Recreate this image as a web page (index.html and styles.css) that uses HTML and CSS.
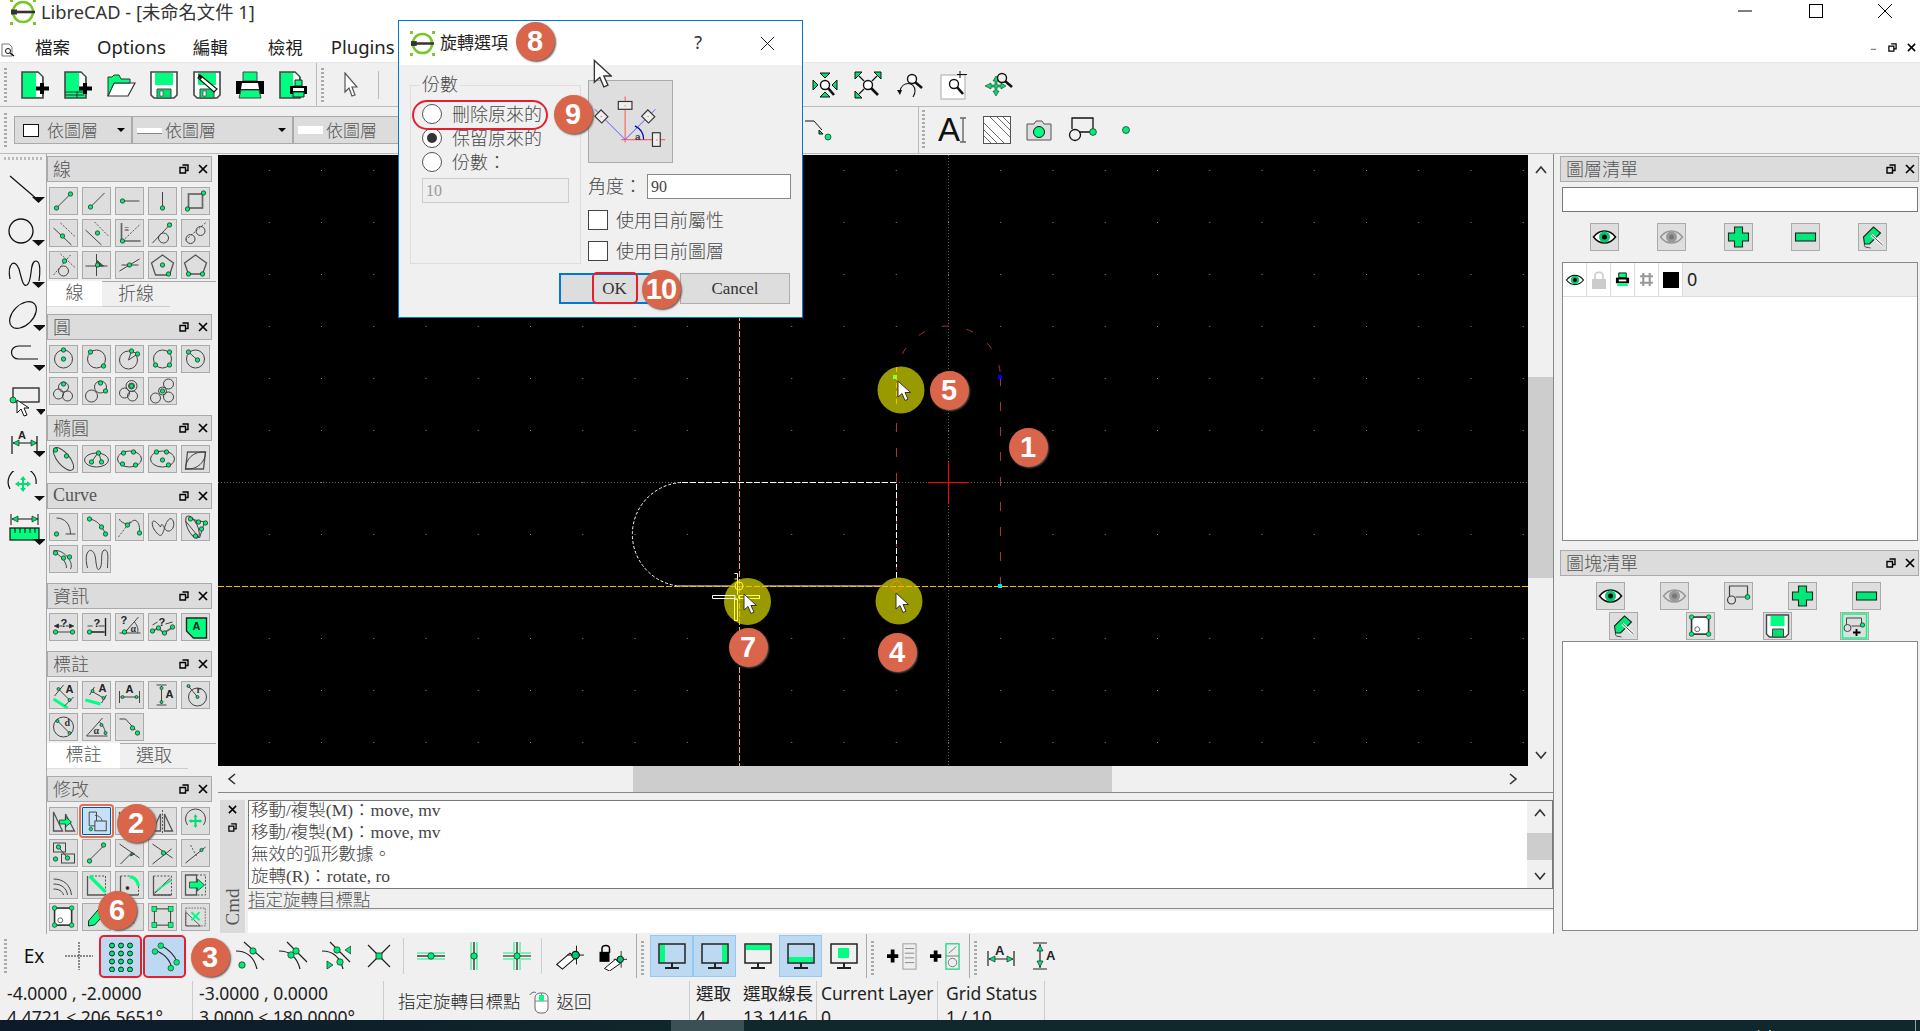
FILE: index.html
```html
<!DOCTYPE html>
<html lang="zh-Hant">
<head>
<meta charset="utf-8">
<title>LibreCAD</title>
<link rel="stylesheet" href="styles.css">
</head>
<body>
<svg class="defs" aria-hidden="true">
<symbol id="logo" viewBox="0 0 26 26"><circle cx="13" cy="13" r="10" fill="none" stroke="#7ac52a" stroke-width="2.6"/><path d="M1 13H25" stroke="#333" stroke-width="2.6"/><rect x="1" y="10.5" width="6" height="5" fill="#333"/><path d="M0 0h3v3H0zM23 0h3v3h-3zM0 23h3v3H0zM23 23h3v3h-3z" fill="#7ac52a"/></symbol>
<symbol id="dockf" viewBox="0 0 10 10"><path d="M3.5 1h5.5v5.5h-2.500M1 3.500h5.500V9H1z" fill="none" stroke="#000" stroke-width="1.400"/></symbol>
<symbol id="dockx" viewBox="0 0 10 10"><path d="M1 1L9 9M9 1L1 9" stroke="#000" stroke-width="1.700"/></symbol>
<symbol id="cursor" viewBox="0 0 14 22"><path d="M1 1V17L5 13.500 8 20.500 11 19.200 8 12.500H13.500z" fill="#fff" stroke="#333" stroke-width="1"/></symbol>

<symbol id="tnew" viewBox="0 0 30 30"><path d="M2 2H18L23 7V28H2z" fill="#00ff80" stroke="#444" stroke-width="1.600"/><path d="M16 3H18L22 7V27H16z" fill="#fff"/><path d="M22 13V24M16 18.500H29" stroke="#000" stroke-width="4"/></symbol>
<symbol id="ttpl" viewBox="0 0 30 30"><path d="M2 2H18L23 7V28H2z" fill="#00ff80" stroke="#444" stroke-width="1.600"/><path d="M16 3H18L22 7V18H16z" fill="#fff"/><path d="M2 22H21M2 25H21M14 21V28" stroke="#333"/><path d="M22 13V24M16 18.500H29" stroke="#000" stroke-width="4"/></symbol>
<symbol id="topen" viewBox="0 0 30 30"><path d="M2 26L8 13H29L22 26z" fill="#fff" stroke="#333" stroke-width="1.200"/><path d="M2 26V7H6L8 5H13L15 9H24V13H8L2 26z" fill="#00ff80" stroke="#333"/></symbol>
<symbol id="tsave" viewBox="0 0 30 30"><path d="M2 2H28V25L25 28H5L2 25z" fill="#fff" stroke="#444" stroke-width="1.600"/><path d="M6 3H24V15H6z" fill="#00ff80"/><path d="M8 19H22V28H8z" fill="#00e070" stroke="#444"/><rect x="11" y="21" width="3" height="5" fill="#fff" stroke="#333" stroke-width=".6"/></symbol>
<symbol id="tsaveas" viewBox="0 0 30 30"><path d="M2 2H28V25L25 28H5L2 25z" fill="#fff" stroke="#444" stroke-width="1.600"/><path d="M6 3H24V15H6z" fill="#00ff80"/><path d="M8 19H22V28H8z" fill="#00e070" stroke="#444"/><rect x="11" y="21" width="3" height="5" fill="#fff" stroke="#333" stroke-width=".6"/><path d="M8 5L25 19 22 22 6 8z" fill="#fff" stroke="#111" stroke-width="1.200"/><path d="M6 4L11 7 8 10z" fill="#111"/></symbol>
<symbol id="tprint" viewBox="0 0 30 30"><path d="M8 2H22V11H8z" fill="#00ff80" stroke="#444"/><path d="M1 11H29V24H1z" fill="#000"/><path d="M7 13H23L24 19H6z" fill="#fff"/><path d="M6 20H24L26 28H4z" fill="#00ff80" stroke="#444"/></symbol>
<symbol id="tprev" viewBox="0 0 30 30"><path d="M2 2H17L22 7V28H2z" fill="#00ff80" stroke="#444" stroke-width="1.600"/><path d="M15 3H17L21 7V15H15z" fill="#fff"/><path d="M17 10H24V16H17z" fill="#00ff80" stroke="#222"/><path d="M12 16H29V24H12z" fill="#000"/><path d="M15 18H26V21H15z" fill="#fff"/><path d="M15 22H26V27H15z" fill="#00ff80" stroke="#222"/></symbol>
<symbol id="tptr" viewBox="0 0 14 26"><path d="M1 1V20L5 16 8 24 11 23 8 15H13z" fill="#fff" stroke="#555" stroke-width="1.200"/></symbol>
<symbol id="z1" viewBox="0 0 30 30"><g fill="#00e070" stroke="#111"><path d="M10 3H20L15 8z"/><path d="M10 27H20L15 22z"/><path d="M3 10V20L8 15z"/><path d="M27 10V20L22 15z"/></g><circle cx="15" cy="15" r="4.500" fill="#fff" stroke="#111" stroke-width="1.400"/><path d="M18 18L24 25" stroke="#111" stroke-width="2.600"/></symbol>
<symbol id="z2" viewBox="0 0 30 30"><g fill="#00e070" stroke="#111"><path d="M2 2H9L2 9z"/><path d="M28 2H21L28 9z"/><path d="M2 28H9L2 21z"/></g><path d="M6 6L11 11M24 6L19 11M6 24L11 19" stroke="#111" stroke-width="1.200"/><circle cx="15" cy="15" r="4.500" fill="#fff" stroke="#111" stroke-width="1.400"/><path d="M18 18L25 25" stroke="#111" stroke-width="2.600"/></symbol>
<symbol id="z3" viewBox="0 0 30 30"><circle cx="16" cy="9" r="4.500" fill="#fff" stroke="#111" stroke-width="1.400"/><path d="M19 12L26 18" stroke="#111" stroke-width="2.600"/><path d="M4 21C6 11 19 11 19 21C19 24 18 25 17 27" fill="none" stroke="#111" stroke-width="1.100"/><path d="M1 20H6L4 25z" fill="#111"/></symbol>
<symbol id="z4" viewBox="0 0 30 30"><rect x="2" y="5" width="24" height="24" fill="#fff" stroke="#aaa"/><path d="M21 1V8M18 4.500H28" stroke="#111"/><circle cx="15" cy="14" r="4.500" fill="#fff" stroke="#111" stroke-width="1.400"/><path d="M18 17L24 24" stroke="#111" stroke-width="2.600"/></symbol>
<symbol id="z5" viewBox="0 0 30 30"><path d="M13 6L16 11H14V15H18V13L23 16 18 19V17H14V21H16L13 26 10 21H12V17H8V19L2 16 8 13V15H12V11H10z" fill="#00e070" stroke="#111" stroke-width=".5"/><circle cx="19" cy="8" r="4.500" fill="none" stroke="#111" stroke-width="1.400"/><path d="M22 11L29 17" stroke="#111" stroke-width="2.600"/></symbol>
<symbol id="tline" viewBox="0 0 30 30"><path d="M1 6H10L18 15" fill="none" stroke="#111"/><path d="M15 15L19 19H15z" fill="#00e070" stroke="#111"/><circle class="p" cx="24" cy="22" r="3"/></symbol>
<symbol id="ttext" viewBox="0 0 30 30"><text x="0" y="26" class="tA">A</text><path d="M22 3H28M25 3V27M22 27H28" stroke="#666" stroke-width="1.400"/></symbol>
<symbol id="thatch" viewBox="0 0 28 28"><rect x=".5" y=".5" width="27" height="27" fill="#fff" stroke="#555"/><path d="M1 7L21 27M1 14L14 27M1 20L8 27M7 1L27 21M14 1L27 14M20 1L27 8" stroke="#444" stroke-width=".8"/></symbol>
<symbol id="tcam" viewBox="0 0 26 26"><path d="M1 7H8L10 4H16L18 7H25V23H1z" fill="#ddd" stroke="#555"/><circle cx="13" cy="15" r="5.500" fill="#00ff80" stroke="#111"/></symbol>
<symbol id="tblock" viewBox="0 0 30 30"><path d="M4 14V3H25V17H11" fill="none" stroke="#111" stroke-width="1.300"/><circle cx="7" cy="20" r="5.500" fill="none" stroke="#111" stroke-width="1.300"/><circle class="p" cx="25" cy="17" r="3.400"/></symbol>
<symbol id="tpt" viewBox="0 0 10 10"><circle class="p" cx="5" cy="5" r="3.500"/></symbol>

<symbol id="sline" viewBox="0 0 40 30"><path d="M5 2L33 26" stroke="#111" stroke-width="1.200"/><path d="M27 23H40L33.500 29z" fill="#111"/></symbol>
<symbol id="scirc" viewBox="0 0 40 30"><circle cx="16" cy="14" r="12" fill="none" stroke="#111" stroke-width="1.300"/><path d="M27 23H40L33.500 29z" fill="#111"/></symbol>
<symbol id="sspl" viewBox="0 0 40 30"><path d="M5 20C2 4 10-1 14 10C17 21 18 28 22 26C28 22 24 2 31 2C36 2 35 15 34 22" fill="none" stroke="#111" stroke-width="1.200"/><path d="M27 23H40L33.500 29z" fill="#111"/></symbol>
<symbol id="sell" viewBox="0 0 40 30"><ellipse cx="18" cy="13" rx="10" ry="16" transform="rotate(45 18 13)" fill="none" stroke="#111" stroke-width="1.200"/><path d="M28 23H41L34.500 29z" fill="#111"/></symbol>
<symbol id="spoly" viewBox="0 0 40 30"><path d="M26 2H14C4 2 4 15 14 15H33" fill="none" stroke="#111" stroke-width="1.200"/><path d="M28 21H41L34.500 27z" fill="#111"/></symbol>
<symbol id="ssel" viewBox="0 0 40 32"><rect x="8" y="2" width="26" height="14" fill="none" stroke="#111" stroke-width="1.200"/><circle class="p" cx="8" cy="14" r="3"/><path d="M12 14V27L16 23 19 30 22 29 19 22H24z" fill="#fff" stroke="#111"/><path d="M31 23H41L36 29z" fill="#111"/></symbol>
<symbol id="sdim" viewBox="0 0 40 32"><path d="M7 8V26M32 8V26M8 15H32" stroke="#111" stroke-width="1.200"/><path d="M8 15L14 12V18zM32 15L26 12V18z" fill="#00e070" stroke="#111" stroke-width=".6"/><text x="13" y="11" class="tB">A</text><path d="M28 23H41L34.500 29z" fill="#111"/></symbol>
<symbol id="smod" viewBox="0 0 40 32"><path d="M5 18A14 14 0 1 1 31 13" fill="none" stroke="#111" stroke-width="1.200"/><path d="M18 5L21 9H19V12H22V10L26 13 22 16V14H19V17H21L18 21 15 17H17V14H14V16L10 13 14 10V12H17V9H15z" fill="#00e070"/><path d="M29 25H40L34.500 30z" fill="#111"/></symbol>
<symbol id="smeas" viewBox="0 0 40 32"><path d="M6 1V12M33 1V12M7 6H33" stroke="#111"/><path d="M7 6L13 3V9zM33 6L27 3V9z" fill="#00e070" stroke="#111" stroke-width=".6"/><rect x="5" y="15" width="29" height="12" fill="#00ff80" stroke="#111" stroke-width="1.200"/><path d="M10 15V20M15 15V20M20 15V20M25 15V20M30 15V20" stroke="#111"/><path d="M28 26H41L34.500 32z" fill="#111"/></symbol>

<symbol id="l2p" viewBox="0 0 26 26"><path d="M6 20L20 6"/><circle class="p" cx="6" cy="20"/><circle class="p" cx="20" cy="6"/></symbol>
<symbol id="lang" viewBox="0 0 26 26"><path d="M7 19L21 5"/><circle class="p" cx="7" cy="19"/></symbol>
<symbol id="lh" viewBox="0 0 26 26"><path d="M6 13H23"/><circle class="p" cx="6" cy="13"/></symbol>
<symbol id="lv" viewBox="0 0 26 26"><path d="M13 4V20"/><circle class="p" cx="13" cy="20"/></symbol>
<symbol id="lrect" viewBox="0 0 26 26"><rect x="6" y="6" width="14" height="14" class="th"/><circle class="p" cx="21" cy="5"/><circle class="p" cx="5" cy="21"/></symbol>
<symbol id="lpar" viewBox="0 0 26 26"><path d="M3 8L21 25"/><path d="M10 3L25 17" class="da"/><circle class="p" cx="12" cy="16"/></symbol>
<symbol id="lpar2" viewBox="0 0 26 26"><path d="M2 10L18 25"/><path d="M11 2L25 16" class="da"/><circle class="p" cx="14" cy="13"/></symbol>
<symbol id="lortho" viewBox="0 0 26 26"><path d="M5 3V21H24" class="th"/><path d="M6 21L24 4" class="da"/><text x="8" y="12" class="tS">≡</text><circle class="p" cx="6" cy="21"/></symbol>
<symbol id="ltan1" viewBox="0 0 26 26"><path d="M3 23L22 3"/><circle cx="14" cy="18" r="5"/><circle class="p" cx="20" cy="5"/></symbol>
<symbol id="ltan2" viewBox="0 0 26 26"><path d="M3 20L24 2" class="da"/><circle cx="8" cy="19" r="4.500"/><circle cx="18" cy="11" r="4.500"/></symbol>
<symbol id="ltan3" viewBox="0 0 26 26"><path d="M3 23L20 3M10 2L25 16" class="da"/><circle cx="13" cy="19" r="5"/><circle class="p" cx="14" cy="9"/></symbol>
<symbol id="lperp" viewBox="0 0 26 26"><path d="M13 2V24M2 14H24"/><path d="M13 8L20 14H13z" fill="#555"/><circle class="p" cx="14" cy="13"/></symbol>
<symbol id="lrel" viewBox="0 0 26 26"><path d="M3 19L23 7M5 13H22"/><circle class="p" cx="13" cy="13"/></symbol>
<symbol id="pol1" viewBox="0 0 26 26"><path d="M13 3L24 11 20 23H6L2 11z" class="th2"/><circle class="p" cx="13" cy="13"/><circle class="p" cx="19" cy="22"/></symbol>
<symbol id="pol2" viewBox="0 0 26 26"><path d="M13 3L24 11 20 22H6L2 11z" class="th2"/><circle class="p" cx="6" cy="22"/><circle class="p" cx="20" cy="22"/></symbol>

<symbol id="c1" viewBox="0 0 26 26"><circle cx="13" cy="13" r="9"/><circle class="p" cx="13" cy="13"/><circle class="p" cx="13" cy="4"/></symbol>
<symbol id="c2" viewBox="0 0 26 26"><circle cx="13" cy="13" r="9"/><circle class="p" cx="7" cy="6"/><circle class="p" cx="20" cy="20"/></symbol>
<symbol id="c3" viewBox="0 0 26 26"><circle cx="12" cy="14" r="9"/><path d="M12 14L15 5 21 8z" fill="#dedede"/><circle class="p" cx="15" cy="5"/><circle class="p" cx="21" cy="8"/></symbol>
<symbol id="c4" viewBox="0 0 26 26"><circle cx="13" cy="13" r="9"/><circle class="p" cx="20" cy="6"/><circle class="p" cx="6" cy="19"/><circle class="p" cx="20" cy="19"/></symbol>
<symbol id="c5" viewBox="0 0 26 26"><circle cx="13" cy="13" r="9"/><path d="M6 6L15 14"/><circle class="p" cx="6" cy="6"/><circle class="p" cx="15" cy="14"/></symbol>
<symbol id="cc1" viewBox="0 0 26 26"><circle cx="13" cy="9" r="5"/><circle cx="8" cy="16" r="5"/><circle cx="17" cy="18" r="5"/><circle class="p" cx="13" cy="6"/></symbol>
<symbol id="cc2" viewBox="0 0 26 26"><circle cx="8" cy="18" r="6"/><circle cx="17" cy="9" r="6"/><circle class="p" cx="17" cy="5"/><circle class="p" cx="22" cy="13"/></symbol>
<symbol id="cc3" viewBox="0 0 26 26"><circle cx="15" cy="8" r="5.500"/><circle cx="15" cy="8" r="3"/><circle cx="8" cy="15" r="5"/><circle cx="16" cy="18" r="5"/><circle class="p" cx="15" cy="8"/></symbol>
<symbol id="cc4" viewBox="0 0 26 26"><circle cx="19" cy="6" r="5"/><circle cx="6" cy="20" r="5"/><circle cx="19" cy="19" r="5"/><circle cx="13" cy="13" r="4"/><circle class="p" cx="13" cy="13"/></symbol>

<symbol id="e1" viewBox="0 0 26 26"><ellipse cx="13" cy="13" rx="6" ry="14" transform="rotate(-40 13 13)"/><circle class="p" cx="5" cy="4"/><circle class="p" cx="16" cy="10"/></symbol>
<symbol id="e2" viewBox="0 0 26 26"><ellipse cx="13" cy="14" rx="12" ry="7"/><path d="M8 16L15 6 18 16"/><circle class="p" cx="8" cy="16"/><circle class="p" cx="15" cy="7"/><circle class="p" cx="18" cy="16"/></symbol>
<symbol id="e3" viewBox="0 0 26 26"><ellipse cx="13" cy="13" rx="12" ry="8"/><circle class="p" cx="7" cy="7"/><circle class="p" cx="17" cy="6"/><circle class="p" cx="6" cy="18"/><circle class="p" cx="19" cy="19"/></symbol>
<symbol id="e4" viewBox="0 0 26 26"><ellipse cx="13" cy="13" rx="12" ry="8"/><circle class="p" cx="7" cy="6"/><circle class="p" cx="17" cy="6"/><circle class="p" cx="13" cy="14"/><circle class="p" cx="19" cy="19"/></symbol>
<symbol id="e5" viewBox="0 0 26 26"><path d="M5 6H23L21 23H3z" class="th2"/><path d="M3 23C3 13 11 5 23 6C23 16 15 24 3 23z"/></symbol>

<symbol id="a1" viewBox="0 0 26 26"><path d="M6 4C14 4 20 10 20 20"/><path d="M15 20H25"/><circle class="p" cx="6" cy="20"/></symbol>
<symbol id="a2" viewBox="0 0 26 26"><path d="M6 5C13 6 18 11 22 20"/><circle class="p" cx="6" cy="5"/><circle class="p" cx="18" cy="13"/><circle class="p" cx="22" cy="20"/></symbol>
<symbol id="a3" viewBox="0 0 26 26"><path d="M2 23L14 7" class="da"/><path d="M3 5C3 8 12 12 14 9C18 3 24 7 23 19" /><circle class="p" cx="11" cy="11"/><circle class="p" cx="23" cy="19"/></symbol>
<symbol id="s1" viewBox="0 0 26 26"><path d="M11 13C2 1 1 10 5 16C12 26 13 20 15 14C17 6 22 1 24 8C26 15 18 21 15 14C13 10 12 9 11 13"/></symbol>
<symbol id="s2" viewBox="0 0 26 26"><path d="M3 7L17 24"/><ellipse cx="10" cy="13" rx="5" ry="12" transform="rotate(-25 10 13)"/><path d="M8 5L22 8 17 24"/><circle class="p" cx="8" cy="5"/><circle class="p" cx="16" cy="8"/><circle class="p" cx="23" cy="9"/><circle class="p" cx="19" cy="15"/><circle class="p" cx="13" cy="22"/></symbol>
<symbol id="s3" viewBox="0 0 26 26"><path d="M3 5C12 2 24 16 20 23M3 5C10 10 16 15 16 22"/><circle class="p" cx="5" cy="7"/><circle class="p" cx="13" cy="12"/><circle class="p" cx="19" cy="11"/></symbol>
<symbol id="s4" viewBox="0 0 26 26"><path d="M4 22C-1 3 10-1 12 12C13 22 14 25 16 23C20 19 16 5 21 4C26 4 24 15 24 22"/></symbol>

<symbol id="i1" viewBox="0 0 26 26"><path d="M5 18H22"/><path d="M4 12H12M15 12H23"/><path d="M4 12L8 10V14zM23 12L19 10V14z" fill="#222"/><text x="10" y="13" class="tB">?</text><circle class="p" cx="5" cy="18"/><circle class="p" cx="22" cy="18"/></symbol>
<symbol id="i2" viewBox="0 0 26 26"><path d="M6 18H21M22 4V22" class="th3"/><path d="M4 12H9M15 12H21"/><text x="10" y="13" class="tB">?</text><circle class="p" cx="6" cy="18"/></symbol>
<symbol id="i3" viewBox="0 0 26 26"><path d="M3 19H24M7 20L22 3"/><path d="M18 8C21 12 22 15 21 19"/><text x="4" y="10" class="tB">?</text><text x="14" y="18" class="tS2">α</text><circle class="p" cx="8" cy="18"/></symbol>
<symbol id="i4" viewBox="0 0 26 26"><path d="M3 17L9 14 14 19 24 13" class="th"/><text x="9" y="12" class="tB">?</text><path d="M3 11L8 8M16 10L23 8"/><circle class="p" cx="3" cy="17"/><circle class="p" cx="9" cy="14"/><circle class="p" cx="15" cy="19"/><circle class="p" cx="23" cy="13"/></symbol>
<symbol id="i5" viewBox="0 0 26 26"><path d="M4 4H24V24H11L4 17z" fill="#00ff80" stroke="#222" stroke-width="1.400"/><text x="10" y="16" class="tB">A</text></symbol>

<symbol id="d1" viewBox="0 0 26 26"><path d="M3 17L17 26" class="gr"/><path d="M4 14L13 3M14 24L23 15M8 7L19 18"/><text x="15" y="11" class="tB">A</text><circle class="p" cx="8" cy="7" r="1.500"/><circle class="p" cx="19" cy="18" r="1.500"/></symbol>
<symbol id="d2" viewBox="0 0 26 26"><path d="M2 18L17 22" class="gr"/><path d="M6 13L11 5M18 21L23 13M8 9L20 16"/><text x="15" y="10" class="tB">A</text><circle class="p" cx="9" cy="9" r="1.500"/><circle class="p" cx="20" cy="16" r="1.500"/></symbol>
<symbol id="d3" viewBox="0 0 26 26"><path d="M3 9V21M23 9V21M4 15H22"/><text x="9" y="11" class="tB">A</text><circle class="p" cx="6" cy="15" r="1.500"/><circle class="p" cx="20" cy="15" r="1.500"/></symbol>
<symbol id="d4" viewBox="0 0 26 26"><path d="M7 3H17M7 23H17M12 4V22"/><text x="16" y="16" class="tB">A</text><circle class="p" cx="12" cy="6" r="1.500"/><circle class="p" cx="12" cy="20" r="1.500"/></symbol>
<symbol id="d5" viewBox="0 0 26 26"><circle cx="15" cy="15" r="9"/><path d="M6 4L15 15"/><text x="14" y="11" class="tS2">r</text><circle class="p" cx="6" cy="4" r="1.500"/><circle class="p" cx="15" cy="15" r="1.500"/></symbol>
<symbol id="d6" viewBox="0 0 26 26"><circle cx="13" cy="13" r="10"/><path d="M6 6L20 20"/><text x="14" y="12" class="tS2">d</text><circle class="p" cx="7" cy="7" r="1.500"/><circle class="p" cx="19" cy="19" r="1.500"/></symbol>
<symbol id="d7" viewBox="0 0 26 26"><path d="M3 22H24M3 22L19 4"/><path d="M16 8C20 12 22 16 22 21"/><text x="10" y="20" class="tS2">α</text><circle class="p" cx="18" cy="11" r="1.500"/><circle class="p" cx="22" cy="19" r="1.500"/></symbol>
<symbol id="d8" viewBox="0 0 26 26"><path d="M3 5H9L19 16"/><circle class="p" cx="16" cy="14"/><circle class="p" cx="21" cy="19"/></symbol>

<symbol id="m1" viewBox="0 0 26 26"><path d="M3 23V4L12 23z M15 6L24 23H15z" class="th2"/><path d="M9 12H15V9L21 14 15 19V16H9z" fill="#00ff80" stroke="#222" stroke-width=".7"/></symbol>
<symbol id="m2" viewBox="0 0 32 32"><path d="M7 5H16V22H7z" fill="none" stroke="#444" stroke-width="1.200"/><rect x="14" y="16" width="14" height="12" fill="#c5e0f7" stroke="#444" stroke-width="1.200"/><path d="M14 9C19 9 22 12 23 16" fill="none" stroke="#444"/><circle class="p" cx="9" cy="26"/></symbol>
<symbol id="m3" viewBox="0 0 26 26"><path d="M3 23L11 6V23zM15 6L23 23H15z" class="th2"/><path d="M13 2V25" class="da"/></symbol>
<symbol id="m4" viewBox="0 0 26 26"><path d="M5 17A10 10 0 1 1 21 17"/><path d="M13 6L15 9H14V12H17V11L20 13 17 15V14H14V17H15L13 20 11 17H12V14H9V15L6 13 9 11V12H12V9H11z" fill="#00e070" stroke="none"/></symbol>
<symbol id="m5" viewBox="0 0 26 26"><rect x="3" y="3" width="12" height="9"/><rect x="11" y="14" width="13" height="9"/><path d="M8 7L17 18"/><circle class="p" cx="8" cy="7"/><circle class="p" cx="17" cy="18"/><circle class="p" cx="5" cy="19"/></symbol>
<symbol id="m6" viewBox="0 0 26 26"><path d="M5 21L21 5"/><circle class="p" cx="6" cy="21"/><circle class="p" cx="20" cy="5"/></symbol>
<symbol id="m7" viewBox="0 0 26 26"><path d="M3 4L23 18M4 24L15 13"/><path d="M15 12L18 14 14 16z" fill="#00a060"/></symbol>
<symbol id="m8" viewBox="0 0 26 26"><path d="M3 4L23 18M3 24L22 9"/><circle class="p" cx="14" cy="13"/></symbol>
<symbol id="m9" viewBox="0 0 26 26"><path d="M3 23L23 7"/><path d="M8 5L14 16" class="da"/><circle class="p" cx="19" cy="10" r="1.600"/></symbol>
<symbol id="m10" viewBox="0 0 26 26"><path d="M3 7C13 7 20 13 21 23M3 12C11 12 16 16 17 23M3 17C8 17 12 19 13 23"/></symbol>
<symbol id="m11" viewBox="0 0 26 26"><path d="M4 4V23H22" class="th2"/><path d="M8 4H22V23" class="da"/><path d="M6 4L22 20" stroke="#00ff80" stroke-width="3.200"/></symbol>
<symbol id="m12" viewBox="0 0 26 26"><path d="M4 4V23H22" class="th2"/><path d="M4 4H14C19 4 22 9 22 14V23" class="da"/><path d="M13 5C18 5 21 9 22 14" stroke="#00ff80" stroke-width="3.200"/><circle cx="11" cy="16" r="1.500" fill="#222"/></symbol>
<symbol id="m13" viewBox="0 0 26 26"><path d="M4 4H22V23H4z" class="da"/><path d="M4 4V23H22" class="th2"/><path d="M5 21L21 6M5 21C12 16 15 12 21 9" /><path d="M6 20L22 9 22 7 8 17z" fill="#00ff80" stroke="none"/></symbol>
<symbol id="m14" viewBox="0 0 26 26"><path d="M3 3H14V23H3z" class="th2"/><path d="M14 3H23V23H14z" class="da"/><path d="M7 10H15V7L22 13 15 19V16H7z" fill="#00ff80" stroke="#222" stroke-width=".7"/></symbol>
<symbol id="m15" viewBox="0 0 32 32"><rect x="5" y="5" width="21" height="21" fill="#fff" class="th4"/><circle cx="12" cy="20" r="3"/><circle class="p" cx="5" cy="5" r="2.800"/><circle class="p" cx="26" cy="5" r="2.800"/><circle class="p" cx="5" cy="26" r="2.800"/><circle class="p" cx="26" cy="26" r="2.800"/></symbol>
<symbol id="m16" viewBox="0 0 26 26"><path d="M5 17L17 3 23 8 11 21 5 22z" fill="#00ff80" stroke="#222"/></symbol>
<symbol id="m17" viewBox="0 0 26 26"><path d="M18 7A6 6 0 1 0 18 19" /></symbol>
<symbol id="m18" viewBox="0 0 32 32"><rect x="6" y="6" width="20" height="20" fill="none" class="th5"/><g fill="#00ff80" stroke="#222" stroke-width=".6"><rect x="3" y="3" width="6" height="6"/><rect x="23" y="3" width="6" height="6"/><rect x="3" y="23" width="6" height="6"/><rect x="23" y="23" width="6" height="6"/></g></symbol>
<symbol id="m19" viewBox="0 0 32 32"><rect x="4" y="5" width="24" height="22" class="da"/><path d="M4 10L22 27H4z"/><path d="M11 10L21 20M21 10L11 20" stroke="#00ff80" stroke-width="2.400"/></symbol>

<symbol id="eye" viewBox="0 0 26 26"><path d="M2 13C8 5 18 5 24 13C18 21 8 21 2 13z" fill="#fff" stroke="#111" stroke-width="1.600"/><circle cx="13" cy="13" r="5.500" fill="#00c870" stroke="none"/><circle cx="13" cy="13" r="2.500" fill="#000" stroke="none"/></symbol>
<symbol id="eyeg" viewBox="0 0 26 26"><path d="M2 13C8 5 18 5 24 13C18 21 8 21 2 13z" fill="#ddd" stroke="#999" stroke-width="1.600"/><circle cx="13" cy="13" r="5.500" fill="#999" stroke="none"/><circle cx="13" cy="13" r="2.500" fill="#777" stroke="none"/></symbol>
<symbol id="plus" viewBox="0 0 26 26"><path d="M9 3H17V9H23V17H17V23H9V17H3V9H9z" fill="#00e878" stroke="#222" stroke-width="1.100"/></symbol>
<symbol id="minus" viewBox="0 0 26 26"><rect x="3" y="9" width="20" height="8" fill="#00e878" stroke="#222" stroke-width="1.100"/></symbol>
<symbol id="edit" viewBox="0 0 26 26"><path d="M4 13L14 3 21 9 10 20H5z" fill="#00e878" stroke="#222" stroke-width="1.100"/><path d="M12 11L23 21" stroke="#fff" stroke-width="3"/><path d="M12 11L23 21" stroke="#444" stroke-width="1"/><path d="M5 20C4 24 8 23 11 24" fill="none" stroke="#444"/></symbol>
<symbol id="blk" viewBox="0 0 26 26"><path d="M4 14V3H22V14H10" fill="none" stroke="#444" stroke-width="1.200"/><circle cx="6" cy="17" r="4" fill="none" stroke="#444" stroke-width="1.200"/><circle class="p" cx="22" cy="14" r="2.400"/></symbol>
<symbol id="blkadd" viewBox="0 0 26 26"><rect x="1" y="1" width="24" height="24" fill="none" stroke="#00ff80" stroke-width="1.500"/><path d="M5 12V5H20V13H10" fill="none" stroke="#444"/><circle cx="6" cy="15" r="3.500" fill="none" stroke="#444"/><circle class="p" cx="21" cy="12" r="2.200"/><path d="M15 16V23M11.500 19.500H19" stroke="#000" stroke-width="1.800"/></symbol>
<symbol id="blksave" viewBox="0 0 26 26"><path d="M2 2H24V21L21 24H5L2 21z" fill="#fff" stroke="#444" stroke-width="1.400"/><path d="M6 3H20V13H6z" fill="#00ff80" stroke="none"/><path d="M8 16H19V24H8z" fill="#00e070" stroke="#444"/></symbol>

<symbol id="printer" viewBox="0 0 16 16"><path d="M4 1H12V6H4z" fill="#00ff80" stroke="#111"/><path d="M1 6H15V12H1z" fill="#000"/><path d="M4 8H12V10H4z" fill="#fff"/><path d="M3 12H13L14 15H2z" fill="#00ff80"/></symbol>
<symbol id="lock" viewBox="0 0 16 20"><path d="M4 9V6C4 1 12 1 12 6V9" fill="none" stroke="#ccc" stroke-width="1.600"/><rect x="1" y="9" width="14" height="10" fill="#ccc"/></symbol>
<symbol id="hash" viewBox="0 0 14 14"><path d="M4 1V13M10 1V13M1 4H13M1 10H13" stroke="#999" stroke-width="2"/></symbol>

<symbol id="bcross" viewBox="0 0 30 30"><path d="M1 15H29M15 1V29" stroke="#222" stroke-dasharray="2 1"/></symbol>
<symbol id="bgrid" viewBox="0 0 30 30"><g fill="#00e878" stroke="#222" stroke-width="1"><circle cx="6" cy="4" r="2.500"/><circle cx="15" cy="4" r="2.500"/><circle cx="24" cy="4" r="2.500"/><circle cx="6" cy="12" r="2.500"/><circle cx="15" cy="12" r="2.500"/><circle cx="24" cy="12" r="2.500"/><circle cx="6" cy="20" r="2.500"/><circle cx="15" cy="20" r="2.500"/><circle cx="24" cy="20" r="2.500"/><circle cx="6" cy="28" r="2.500"/><circle cx="15" cy="28" r="2.500"/><circle cx="24" cy="28" r="2.500"/></g></symbol>
<symbol id="bend" viewBox="0 0 36 36"><path d="M5 10C15 14 24 20 26 32M11 4C20 8 29 14 33 26" fill="none" stroke="#222" stroke-width="1.300"/><circle class="p" cx="6" cy="12" r="3.400"/><circle class="p" cx="25" cy="32" r="3.400"/><circle class="p" cx="13" cy="5" r="3.400"/><circle class="p" cx="32" cy="25" r="3.400"/></symbol>
<symbol id="bs1" viewBox="0 0 30 30"><path d="M9 1L29 19M1 10C12 10 19 16 22 28" fill="none" stroke="#222" stroke-width="1.200"/><circle class="p" cx="18" cy="10" r="3.200"/><circle class="p" cx="7" cy="24" r="3.200"/></symbol>
<symbol id="bs2" viewBox="0 0 30 30"><path d="M9 1L29 21M1 10C12 10 19 16 22 28" fill="none" stroke="#222" stroke-width="1.200"/><circle class="p" cx="18" cy="10" r="3.200"/><circle class="p" cx="13" cy="14" r="3.200"/></symbol>
<symbol id="bs3" viewBox="0 0 30 30"><path d="M9 1L29 21M1 10C12 10 19 16 22 28" fill="none" stroke="#222" stroke-width="1.200"/><circle class="p" cx="16" cy="9" r="3.200"/><circle class="p" cx="19" cy="21" r="3.200"/><path d="M24 9L30 5V13zM6 20L12 24 6 28z" fill="#00e878" stroke="#222" stroke-width=".7"/></symbol>
<symbol id="bs4" viewBox="0 0 30 30"><path d="M4 4L26 26M26 4L4 26" stroke="#222" stroke-width="1.200"/><rect x="12" y="12" width="6" height="6" fill="#00e878" stroke="#222" stroke-width=".8"/></symbol>
<symbol id="bh" viewBox="0 0 30 30"><path d="M1 12H29M1 18H29" stroke="#7ff0b8" stroke-width="2"/><path d="M1 15H29" stroke="#111" stroke-width="1.200"/><circle class="p" cx="15" cy="15" r="3.200"/></symbol>
<symbol id="bv" viewBox="0 0 30 30"><path d="M12 1V29M18 1V29" stroke="#7ff0b8" stroke-width="2"/><path d="M15 1V29" stroke="#111" stroke-width="1.200"/><circle class="p" cx="15" cy="15" r="3.200"/></symbol>
<symbol id="bhv" viewBox="0 0 30 30"><path d="M1 12H12V1M1 18H12V29M29 12H18V1M29 18H18V29" fill="none" stroke="#7ff0b8" stroke-width="2"/><path d="M1 15H29M15 1V29" stroke="#111" stroke-width="1.200"/><circle class="p" cx="15" cy="15" r="3.200"/></symbol>
<symbol id="brel" viewBox="0 0 32 30"><path d="M3 24L17 12 23 17 9 29z" fill="#fff" stroke="#111" stroke-width="1.200"/><path d="M24 4V24M14 14H32" stroke="#111"/><circle cx="23" cy="14" r="4" fill="#00c870" stroke="#111" stroke-width="1.200"/></symbol>
<symbol id="brell" viewBox="0 0 36 30"><path d="M6 11V6C6 1 15 1 15 6V11" fill="none" stroke="#000" stroke-width="1.800"/><rect x="3" y="10" width="12" height="12" fill="#000"/><path d="M9 30L22 19 28 24 15 33z" fill="#fff" stroke="#111" stroke-width="1.200"/><path d="M29 9V29M20 19H36" stroke="#111"/><circle cx="28" cy="19" r="3.800" fill="#00c870" stroke="#111" stroke-width="1.200"/></symbol>
<symbol id="mon1" viewBox="0 0 32 28"><rect x="3" y="2" width="26" height="19" fill="#bdd9f1" stroke="#222" stroke-width="1.500"/><rect x="4" y="3" width="5" height="17" fill="#00ff80"/><path d="M16 21V25M9 26H23" stroke="#222" stroke-width="2"/></symbol>
<symbol id="mon2" viewBox="0 0 32 28"><rect x="3" y="2" width="26" height="19" fill="#bdd9f1" stroke="#222" stroke-width="1.500"/><rect x="23" y="3" width="5" height="17" fill="#00ff80"/><path d="M16 21V25M9 26H23" stroke="#222" stroke-width="2"/></symbol>
<symbol id="mon3" viewBox="0 0 32 28"><rect x="3" y="2" width="26" height="19" fill="#f0f0f0" stroke="#222" stroke-width="1.500"/><rect x="4" y="3" width="24" height="5" fill="#00ff80"/><path d="M16 21V25M9 26H23" stroke="#222" stroke-width="2"/></symbol>
<symbol id="mon4" viewBox="0 0 32 28"><rect x="3" y="2" width="26" height="19" fill="#bdd9f1" stroke="#222" stroke-width="1.500"/><rect x="4" y="15" width="24" height="5" fill="#00ff80"/><path d="M16 21V25M9 26H23" stroke="#222" stroke-width="2"/></symbol>
<symbol id="mon5" viewBox="0 0 32 28"><rect x="3" y="2" width="26" height="19" fill="#f0f0f0" stroke="#222" stroke-width="1.500"/><rect x="10" y="6" width="11" height="10" fill="#00ff80"/><path d="M16 21V25M9 26H23" stroke="#222" stroke-width="2"/></symbol>
<symbol id="ladd" viewBox="0 0 32 30"><path d="M6 8V22M0 15H12" stroke="#000" stroke-width="4"/><rect x="17" y="2" width="14" height="27" fill="#eee" stroke="#999"/><path d="M19 7H29M19 12H29M19 17H29M19 22H29" stroke="#888"/></symbol>
<symbol id="badd" viewBox="0 0 32 30"><path d="M6 9V21M0 15H12" stroke="#000" stroke-width="4"/><rect x="17" y="2" width="14" height="27" fill="#eee" stroke="#00d070" stroke-width="1.200"/><path d="M17 15H31M20 12L28 5" stroke="#777"/><circle cx="24" cy="22" r="4.500" fill="none" stroke="#777"/></symbol>
<symbol id="mouse" viewBox="0 0 20 24"><path d="M1 5C1 3 6 1 7 3" fill="none" stroke="#555"/><rect x="6" y="3" width="13" height="20" rx="5" fill="#fff" stroke="#666"/><path d="M6 11H19M12.500 3V11" stroke="#888"/><rect x="10" y="5" width="5" height="6" fill="#00ff80"/></symbol>
<symbol id="dimh" viewBox="0 0 30 30"><path d="M2 10V25M28 10V25M3 18H27" stroke="#222" stroke-width="1.200"/><text x="9" y="14" class="tB2">A</text><path d="M3 18L9 15V21zM27 18L21 15V21z" fill="#00e878" stroke="#222" stroke-width=".7"/></symbol>
<symbol id="dimv" viewBox="0 0 30 30"><path d="M4 2H18M4 28H18M11 3V27" stroke="#222" stroke-width="1.200"/><text x="17" y="19" class="tB2">A</text><path d="M11 4L8 10H14zM11 26L8 20H14z" fill="#00e878" stroke="#222" stroke-width=".7"/></symbol>
<symbol id="rotimg" viewBox="0 0 85 83"><path d="M33 60H78M37 16V63" stroke="#f66" stroke-width="1.200"/><path d="M6 29L37 60L68 29" fill="none" stroke="#55f"/><g fill="#eee" stroke="#333" stroke-width="1.200"><rect x="30" y="21" width="14" height="8"/><rect x="65" y="53" width="8" height="14"/><rect x="8" y="32" width="10" height="9" transform="rotate(45 13 36)"/><rect x="56" y="32" width="10" height="9" transform="rotate(45 61 36)"/></g><path d="M36.500 25h1v1h-1zM12 36h1v1h-1zM60 36h1v1h-1zM69 60h1v1h-1z" fill="#f00"/><path d="M47 46C53 49 56 54 56 60" fill="none" stroke="#00c" stroke-width="1.200"/><text x="47" y="60" class="tS3">a</text></symbol>
</svg>

<header class="titlebar">
  <svg class="tlogo"><use href="#logo"/></svg>
  <span class="tname">LibreCAD - [未命名文件 1]</span>
  <div class="winctl">
    <svg class="wb" viewBox="0 0 70 22"><path d="M28 11H42" stroke="#000"/></svg>
    <svg class="wb" viewBox="0 0 70 22"><rect x="29.500" y="4.500" width="13" height="13" fill="none" stroke="#000"/></svg>
    <svg class="wb" viewBox="0 0 70 22"><path d="M28 4L42 18M42 4L28 18" stroke="#000"/></svg>
  </div>
</header>
<nav class="menubar">
  <svg class="micon" viewBox="0 0 14 14"><path d="M1 1H8L11 4V13H1z" fill="#fff" stroke="#777"/><circle cx="7" cy="8" r="2.500" fill="none" stroke="#111"/><path d="M9 10L13 13" stroke="#111" stroke-width="1.500"/></svg>
  <span class="mi mi1">檔案</span><span class="mi mi2">Options</span><span class="mi mi3">編輯</span><span class="mi mi4">檢視</span><span class="mi mi5">Plugins</span>
  <div class="mdi"><svg class="mdib" viewBox="0 0 10 10"><path d="M2 7H8" stroke="#555"/></svg><svg class="mdib"><use href="#dockf"/></svg><svg class="mdib"><use href="#dockx"/></svg></div>
</nav>
<section class="tb1">
  <i class="grip"></i>
  <svg class="t30 first"><use href="#tnew"/></svg><svg class="t30"><use href="#ttpl"/></svg><svg class="t30"><use href="#topen"/></svg><svg class="t30"><use href="#tsave"/></svg><svg class="t30"><use href="#tsaveas"/></svg><svg class="t30"><use href="#tprint"/></svg><svg class="t30"><use href="#tprev"/></svg>
  <i class="sep s1"></i><i class="grip g2"></i>
  <svg class="tptr"><use href="#tptr"/></svg>
  <i class="sep s2"></i>
  <span class="hole"></span>
  <svg class="t30 z"><use href="#z1"/></svg><svg class="t30 z"><use href="#z2"/></svg><svg class="t30 z"><use href="#z3"/></svg><svg class="t30 z"><use href="#z4"/></svg><svg class="t30 z"><use href="#z5"/></svg>
</section>
<section class="tb2">
  <i class="grip"></i>
  <div class="combo c-a"><span class="swatch"></span><span class="cl">依圖層</span><b class="dd"></b></div>
  <div class="combo c-b"><span class="lsw"></span><span class="cl">依圖層</span><b class="dd"></b></div>
  <div class="combo c-c"><span class="wsw"></span><span class="cl">依圖層</span></div>
  <span class="hole2"></span>
  <svg class="t30 tl"><use href="#tline"/></svg>
  <i class="sep s3"></i><i class="grip g3"></i>
  <svg class="t30 ttx"><use href="#ttext"/></svg><svg class="t28"><use href="#thatch"/></svg><svg class="t26"><use href="#tcam"/></svg><svg class="t30 tbk"><use href="#tblock"/></svg><svg class="tp"><use href="#tpt"/></svg>
</section>

<main class="main">
  <aside class="lcol">
    <i class="hgrip"></i>
    <svg class="sic"><use href="#sline"/></svg><svg class="sic"><use href="#scirc"/></svg><svg class="sic"><use href="#sspl"/></svg><svg class="sic"><use href="#sell"/></svg><svg class="sic"><use href="#spoly"/></svg><svg class="sic"><use href="#ssel"/></svg><svg class="sic"><use href="#sdim"/></svg><svg class="sic"><use href="#smod"/></svg><svg class="sic"><use href="#smeas"/></svg>
  </aside>
  <aside class="tools">
    <div class="ph m0"><span>線</span><svg class="dk"><use href="#dockf"/></svg><svg class="dk"><use href="#dockx"/></svg></div>
    <div class="ig g5"><svg class="ib"><use href="#l2p"/></svg><svg class="ib"><use href="#lang"/></svg><svg class="ib"><use href="#lh"/></svg><svg class="ib"><use href="#lv"/></svg><svg class="ib"><use href="#lrect"/></svg><svg class="ib"><use href="#lpar"/></svg><svg class="ib"><use href="#lpar2"/></svg><svg class="ib"><use href="#lortho"/></svg><svg class="ib"><use href="#ltan1"/></svg><svg class="ib"><use href="#ltan2"/></svg><svg class="ib"><use href="#ltan3"/></svg><svg class="ib"><use href="#lperp"/></svg><svg class="ib"><use href="#lrel"/></svg><svg class="ib"><use href="#pol1"/></svg><svg class="ib"><use href="#pol2"/></svg></div>
    <div class="tabs"><span class="tab on w1">線</span><span class="tab w2">折線</span></div>
    <div class="ph m8"><span>圓</span><svg class="dk"><use href="#dockf"/></svg><svg class="dk"><use href="#dockx"/></svg></div>
    <div class="ig g5"><svg class="ib"><use href="#c1"/></svg><svg class="ib"><use href="#c2"/></svg><svg class="ib"><use href="#c3"/></svg><svg class="ib"><use href="#c4"/></svg><svg class="ib"><use href="#c5"/></svg><svg class="ib"><use href="#cc1"/></svg><svg class="ib"><use href="#cc2"/></svg><svg class="ib"><use href="#cc3"/></svg><svg class="ib"><use href="#cc4"/></svg></div>
    <div class="ph m10"><span>橢圓</span><svg class="dk"><use href="#dockf"/></svg><svg class="dk"><use href="#dockx"/></svg></div>
    <div class="ig g4"><svg class="ib"><use href="#e1"/></svg><svg class="ib"><use href="#e2"/></svg><svg class="ib"><use href="#e3"/></svg><svg class="ib"><use href="#e4"/></svg><svg class="ib"><use href="#e5"/></svg></div>
    <div class="ph m10"><span>Curve</span><svg class="dk"><use href="#dockf"/></svg><svg class="dk"><use href="#dockx"/></svg></div>
    <div class="ig g4"><svg class="ib"><use href="#a1"/></svg><svg class="ib"><use href="#a2"/></svg><svg class="ib"><use href="#a3"/></svg><svg class="ib"><use href="#s1"/></svg><svg class="ib"><use href="#s2"/></svg><svg class="ib"><use href="#s3"/></svg><svg class="ib"><use href="#s4"/></svg></div>
    <div class="ph m10"><span>資訊</span><svg class="dk"><use href="#dockf"/></svg><svg class="dk"><use href="#dockx"/></svg></div>
    <div class="ig g4"><svg class="ib"><use href="#i1"/></svg><svg class="ib"><use href="#i2"/></svg><svg class="ib"><use href="#i3"/></svg><svg class="ib"><use href="#i4"/></svg><svg class="ib"><use href="#i5"/></svg></div>
    <div class="ph m10"><span>標註</span><svg class="dk"><use href="#dockf"/></svg><svg class="dk"><use href="#dockx"/></svg></div>
    <div class="ig g4"><svg class="ib"><use href="#d1"/></svg><svg class="ib"><use href="#d2"/></svg><svg class="ib"><use href="#d3"/></svg><svg class="ib"><use href="#d4"/></svg><svg class="ib"><use href="#d5"/></svg><svg class="ib"><use href="#d6"/></svg><svg class="ib"><use href="#d7"/></svg><svg class="ib"><use href="#d8"/></svg></div>
    <div class="tabs"><span class="tab on w3">標註</span><span class="tab w4">選取</span></div>
    <div class="ph m8"><span>修改</span><svg class="dk"><use href="#dockf"/></svg><svg class="dk"><use href="#dockx"/></svg></div>
    <div class="ig g5"><svg class="ib"><use href="#m1"/></svg><svg class="ib sel"><use href="#m2"/></svg><svg class="ib"><use href="#m1"/></svg><svg class="ib"><use href="#m3"/></svg><svg class="ib"><use href="#m4"/></svg><svg class="ib"><use href="#m5"/></svg><svg class="ib"><use href="#m6"/></svg><svg class="ib"><use href="#m7"/></svg><svg class="ib"><use href="#m8"/></svg><svg class="ib"><use href="#m9"/></svg><svg class="ib"><use href="#m10"/></svg><svg class="ib"><use href="#m11"/></svg><svg class="ib"><use href="#m12"/></svg><svg class="ib"><use href="#m13"/></svg><svg class="ib"><use href="#m14"/></svg><svg class="ib"><use href="#m15"/></svg><svg class="ib"><use href="#m16"/></svg><svg class="ib"><use href="#m17"/></svg><svg class="ib"><use href="#m18"/></svg><svg class="ib"><use href="#m19"/></svg></div>
  </aside>
  <div class="center">
    <div class="canvasrow">
      <svg class="canvas" viewBox="218 155 1310 611">
        <defs><pattern id="griddots" x="739" y="326" width="52.250" height="52" patternUnits="userSpaceOnUse"><rect width="1" height="1" fill="#888"/></pattern></defs>
        <rect x="218" y="155" width="1310" height="611" fill="#000"/>
        <rect x="218" y="155" width="1310" height="611" fill="url(#griddots)"/>
        <path d="M218 482.500H1528M948.500 155V766" stroke="#666" stroke-dasharray="1 2"/>
        <path d="M682 482.500H896.500V586" fill="none" stroke="#fff" stroke-dasharray="6 2"/>
        <path d="M681 482.500A52 52 0 0 0 678 586" fill="none" stroke="#fff" stroke-dasharray="3 2"/>
        <path d="M678 586H897" stroke="#fff"/>
        <path d="M896.500 482V378M1000.500 586V378" stroke="#a33" stroke-dasharray="9 16"/>
        <path d="M896.500 378A52 52 0 0 1 1000.500 378" fill="none" stroke="#a33" stroke-dasharray="7 18"/>
        <path d="M896.500 570V482" stroke="#a33" stroke-dasharray="3 20"/>
        <path d="M928 482.500H969M948.500 462V503" stroke="#f00"/>
        <circle cx="901" cy="390" r="23.500" fill="#999900"/><circle cx="899" cy="601" r="23.500" fill="#999900"/><circle cx="747.500" cy="601.500" r="23.500" fill="#999900"/>
        <path d="M218 586.500H1528" stroke="#fb0" stroke-dasharray="6 2"/>
        <path d="M739.500 155V766" stroke="#fb0" stroke-dasharray="6 2"/>
        <path d="M896.500 367V405" stroke="#fb0" stroke-dasharray="5 3"/>
        <circle cx="896.500" cy="586" r="5" fill="none" stroke="#f80"/>
        <circle cx="739" cy="586" r="4" fill="none" stroke="#ff0"/>
        <rect x="893" y="375" width="4" height="4" fill="#8f4"/><rect x="998" y="375" width="4" height="4" fill="#00f"/><rect x="998" y="584" width="4" height="4" fill="#0dd"/>
        <path d="M712.500 595.500H735V598.500H712.500zM739 595.500H759.500V598.500H739zM734.500 573.500H737.500V595M734.500 599H737.500V620.500H734.500z" fill="none" stroke="#fff"/>
        <path d="M739 595.500H759.500V598.500H739zM734.500 579H737.500V595M734.500 599H737.500V620.500H734.500z" fill="none" stroke="#ff4"/>
        <use href="#cursor" x="897" y="380" width="14" height="22"/><use href="#cursor" x="895" y="592" width="14" height="22"/><use href="#cursor" x="743" y="593" width="14" height="22"/>
      </svg>
      <div class="vs">
        <svg class="arr" viewBox="0 0 12 8"><path d="M1 7L6 1 11 7" fill="none" stroke="#333" stroke-width="1.600"/></svg>
        <span class="vthumb"></span>
        <svg class="arr" viewBox="0 0 12 8"><path d="M1 1L6 7 11 1" fill="none" stroke="#333" stroke-width="1.600"/></svg>
      </div>
    </div>
    <div class="hs">
      <svg class="arrh" viewBox="0 0 8 12"><path d="M7 1L1 6 7 11" fill="none" stroke="#333" stroke-width="1.600"/></svg>
      <span class="hthumb"></span>
      <svg class="arrh" viewBox="0 0 8 12"><path d="M1 1L7 6 1 11" fill="none" stroke="#333" stroke-width="1.600"/></svg>
    </div>
    <div class="cmd">
      <div class="cmdt">
        <svg class="dk2"><use href="#dockx"/></svg><svg class="dk2"><use href="#dockf"/></svg>
        <span class="cmdl">Cmd</span>
      </div>
      <div class="cmdb">
        <div class="hist">
          <div class="hl"><p>移動/複製(M)：move, mv</p><p>移動/複製(M)：move, mv</p><p>無效的弧形數據。</p><p>旋轉(R)：rotate, ro</p></div>
          <div class="hv">
            <svg class="arr" viewBox="0 0 12 8"><path d="M1 7L6 1 11 7" fill="none" stroke="#333" stroke-width="1.600"/></svg>
            <span class="hvthumb"></span>
            <svg class="arr" viewBox="0 0 12 8"><path d="M1 1L6 7 11 1" fill="none" stroke="#333" stroke-width="1.600"/></svg>
          </div>
        </div>
        <div class="prompt">指定旋轉目標點</div>
        <div class="cinput"></div>
      </div>
    </div>
  </div>
  <aside class="rpanel">
    <div class="ph rh"><span>圖層清單</span><svg class="dk"><use href="#dockf"/></svg><svg class="dk"><use href="#dockx"/></svg></div>
    <div class="rinput"></div>
    <div class="rbtns"><svg class="ib"><use href="#eye"/></svg><svg class="ib"><use href="#eyeg"/></svg><svg class="ib"><use href="#plus"/></svg><svg class="ib"><use href="#minus"/></svg><svg class="ib"><use href="#edit"/></svg></div>
    <div class="rlist r1">
      <div class="lrow">
        <span class="cell"><svg class="ci"><use href="#eye"/></svg></span>
        <span class="cell"><svg class="ci"><use href="#lock"/></svg></span>
        <span class="cell"><svg class="ci2"><use href="#printer"/></svg></span>
        <span class="cell"><svg class="ci2"><use href="#hash"/></svg></span>
        <span class="cell"><i class="blk"></i></span>
        <span class="lname">0</span>
      </div>
    </div>
    <div class="ph rh r2h"><span>圖塊清單</span><svg class="dk"><use href="#dockf"/></svg><svg class="dk"><use href="#dockx"/></svg></div>
    <div class="rb2a"><svg class="ib"><use href="#eye"/></svg><svg class="ib"><use href="#eyeg"/></svg><svg class="ib"><use href="#blk"/></svg><svg class="ib"><use href="#plus"/></svg><svg class="ib"><use href="#minus"/></svg></div>
    <div class="rb2b"><svg class="ib"><use href="#edit"/></svg><svg class="ib"><use href="#m15"/></svg><svg class="ib"><use href="#blksave"/></svg><svg class="ib"><use href="#blkadd"/></svg></div>
    <div class="rlist r2"></div>
  </aside>
</main>

<section class="tb3">
  <i class="grip"></i>
  <span class="bex">Ex</span>
  <svg class="b b-cross"><use href="#bcross"/></svg>
  <span class="bred"><svg class="bi"><use href="#bgrid"/></svg></span>
  <span class="bred"><svg class="bi"><use href="#bend"/></svg></span>
  <span class="bgap"></span>
  <svg class="b"><use href="#bs1"/></svg><svg class="b"><use href="#bs2"/></svg><svg class="b"><use href="#bs3"/></svg><svg class="b"><use href="#bs4"/></svg>
  <i class="sep s4"></i>
  <svg class="b"><use href="#bh"/></svg><svg class="b"><use href="#bv"/></svg><svg class="b"><use href="#bhv"/></svg>
  <i class="sep s4"></i>
  <svg class="b"><use href="#brel"/></svg><svg class="b"><use href="#brell"/></svg>
  <i class="sep s5"></i><i class="grip g4"></i>
  <span class="bm on"><svg class="mi32"><use href="#mon1"/></svg></span><span class="bm on"><svg class="mi32"><use href="#mon2"/></svg></span><span class="bm"><svg class="mi32"><use href="#mon3"/></svg></span><span class="bm on"><svg class="mi32"><use href="#mon4"/></svg></span><span class="bm"><svg class="mi32"><use href="#mon5"/></svg></span>
  <i class="sep s6"></i><i class="grip g4"></i>
  <svg class="b b-l1"><use href="#ladd"/></svg><svg class="b"><use href="#badd"/></svg>
  <i class="sep s7"></i><i class="grip g4"></i>
  <svg class="b b-d"><use href="#dimh"/></svg><svg class="b"><use href="#dimv"/></svg>
</section>
<footer class="status">
  <div class="st st1"><span>-4.0000 , -2.0000</span><span>4.4721 &lt; 206.5651°</span></div>
  <div class="st st2"><span>-3.0000 , 0.0000</span><span>3.0000 &lt; 180.0000°</span></div>
  <div class="st st3"><span>指定旋轉目標點</span><svg class="mouse"><use href="#mouse"/></svg><span>返回</span></div>
  <div class="st st4"><span>選取</span><span>4</span></div>
  <div class="st st5"><span>選取線長</span><span>13.1416</span></div>
  <div class="st st6"><span>Current Layer</span><span>0</span></div>
  <div class="st st7"><span>Grid Status</span><span>1 / 10</span></div>
</footer>
<div class="taskbar"><span class="tbsel"></span><span class="clock">上午 11:57</span><i class="tbline"></i></div>

<div class="dialog">
  <div class="dtitle">
    <svg class="dlogo"><use href="#logo"/></svg><span class="dname">旋轉選項</span>
    <span class="dhelp">?</span>
    <svg class="dclose" viewBox="0 0 16 16"><path d="M1 1L15 15M15 1L1 15" stroke="#111"/></svg>
  </div>
  <div class="dbody">
    <div class="dtop">
      <div class="group">
        <span class="legend">份數</span>
        <div class="rr"><i class="radio"></i><span>刪除原來的</span></div>
        <div class="rr"><i class="radio on"></i><span>保留原來的</span></div>
        <div class="rr"><i class="radio"></i><span>份數：</span></div>
        <div class="dis">10</div>
      </div>
      <div class="dright">
        <svg class="rotimg"><use href="#rotimg"/></svg>
        <div class="angle"><span class="al">角度：</span><span class="ainp">90</span></div>
        <div class="ck"><i class="cbox"></i><span>使用目前屬性</span></div>
        <div class="ck ck2"><i class="cbox"></i><span>使用目前圖層</span></div>
      </div>
    </div>
    <div class="dbtns"><span class="btn ok">OK</span><span class="btn cancel">Cancel</span></div>
  </div>
</div>
<svg class="bigcur"><use href="#cursor"/></svg>

<i class="redbox rb-radio"></i>
<i class="redbox rb-ok"></i>
<span class="badge n1">1</span><span class="badge n2">2</span><span class="badge n3">3</span><span class="badge n4">4</span><span class="badge n5">5</span><span class="badge n6">6</span><span class="badge n7">7</span><span class="badge n8">8</span><span class="badge n9">9</span><span class="badge n10">10</span>
</body>
</html>
```
FILE: styles.css
```css
*{box-sizing:border-box}
html,body{margin:0;padding:0}
body{position:relative;width:1920px;height:1031px;overflow:hidden;background:#f0f0f0;display:flex;flex-direction:column;font-family:"Noto Sans","Noto Sans CJK TC",sans-serif;color:#222}
.defs{display:none}
svg{display:block;flex:none;overflow:visible}
i{display:block;font-style:normal}

circle.p:not([r]){r:2.2px}
.p{fill:#00ee77;stroke:#222;stroke-width:.7}
.th{stroke:#666;stroke-width:1.7}
.th2{stroke:#555;stroke-width:1.3}
.th3{stroke:#222;stroke-width:1.4}
.th4{stroke:#333;stroke-width:2}
.th5{stroke:#333;stroke-width:1.2}
.da{stroke-dasharray:2 1.5;stroke:#555}
.gr{stroke:#00ff80;stroke-width:3}
.tA{font:33px "Liberation Sans",sans-serif;fill:#111;stroke:none}
.tB{font:bold 11px "Liberation Sans",sans-serif;fill:#222;stroke:none}
.tB2{font:bold 13px "Liberation Sans",sans-serif;fill:#222;stroke:none}
.tS{font:8px "Liberation Sans",sans-serif;fill:#444;stroke:none}
.tS2{font:bold 10px "Liberation Serif",serif;fill:#333;stroke:none}
.tS3{font:bold 10px "Liberation Sans",sans-serif;fill:#333;stroke:none}

/* title + menu */
.titlebar{height:33px;background:#fff;display:flex;align-items:center;position:relative}
.tlogo{width:26px;height:26px;margin:-9px 0 0 10px}
.tname{font-size:18.3px;margin:-12px 0 0 5px;color:#333}
.winctl{margin-left:auto;display:flex;align-self:flex-start}
.wb{width:70px;height:22px}
.menubar{height:30px;background:#fff;display:flex;align-items:center;border-bottom:1px solid #e6e6e6;font-size:17.5px;color:#222}
.micon{width:14px;height:14px;margin:4px 0 0 1px}
.mi{display:block;margin-top:-2px}
.mi1{margin-left:20px}.mi2{margin-left:27px;font-size:18.5px}.mi3{margin-left:27px}.mi4{margin-left:40px}.mi5{margin-left:28px;font-size:18.5px}
.mdi{margin-left:auto;display:flex;gap:10px;padding-right:4px}
.mdib{width:9px;height:9px}

/* top toolbars */
.tb1{height:44px;display:flex;align-items:center;border-bottom:1px solid #bbb;position:relative;flex:none}
.tb2{height:47px;display:flex;align-items:center;border-bottom:1px solid #bbb;flex:none}
.grip{width:3px;height:34px;margin-left:4px;background:repeating-linear-gradient(#aaa 0 2px,transparent 2px 4px);flex:none}
.t30{width:30px;height:30px;margin-right:13px}
.first{margin-left:13px}
.sep{width:1px;background:#bbb;height:44px;flex:none}
.s1{margin-left:-5px}
.g2{margin-left:4px}
.tptr{width:14px;height:26px;margin-left:20px}
.s2{height:28px;margin-left:20px}
.hole{width:430.5px;flex:none}
.z{margin-right:13.3px}
.combo{height:28px;background:#dcdcdc;border:1px solid #aaa;display:flex;align-items:center;flex:none;color:#555;font-size:17px}
.c-a{width:118px;margin-left:7px;padding-left:8px}
.c-b{width:161px;padding-left:4px}
.c-c{width:106px;padding-left:4px;border-right:0}
.swatch{width:16px;height:13px;background:#fff;border:1px solid #111;margin-right:8px}
.lsw{width:25px;height:7px;background:#fff;border-bottom:1px solid #888;border-top:1px solid #ddd;margin-right:3px}
.wsw{width:25px;height:8px;background:#fff;margin-right:3px}
.cl{font-weight:300;margin-top:-2px}
.dd{margin-left:auto;margin-right:6px;border-left:4px solid transparent;border-right:4px solid transparent;border-top:4px solid #000}
.hole2{width:405px;flex:none}
.tl{margin-left:0;margin-right:0;width:30px}
.s3{margin-left:84px;height:46px}
.g3{margin-left:3px;height:40px}
.ttx{margin-left:13px;margin-right:15px}
.t28{width:28px;height:28px;margin-right:15px}
.t26{width:26px;height:26px;margin-right:16px}
.tbk{margin-right:23px}
.tp{width:10px;height:10px}

/* main */
.main{height:780px;display:flex;flex:none}
.lcol{width:47px;border-right:1px solid #aaa;display:flex;flex-direction:column;align-items:center;padding-top:2px}
.hgrip{width:38px;height:3px;margin:1px 0 13px;background:repeating-linear-gradient(90deg,#bbb 0 2px,transparent 2px 4px)}
.sic{width:40px;height:32px;margin-bottom:10.5px;margin-left:4px}
.tools{width:171px;padding-top:2px;flex:none}
.ph{height:26px;background:#dcdcdc;border:1px solid #aaa;display:flex;align-items:center;width:165px;padding:0 3px 0 5px;font-size:18px;color:#555;font-family:"Liberation Serif","Noto Sans CJK TC",serif;font-weight:300}
.ph span{margin-right:auto;margin-top:-2px}
.dk{width:10px;height:10px;margin-left:9px}
.m8{margin-top:8px}.m10{margin-top:10px}
.ig{display:grid;grid-template-columns:repeat(5,29px);grid-auto-rows:28px;gap:4px;padding-left:2px}
.g5{margin-top:5px}.g4{margin-top:4px}
.ib{width:29px;height:28px;background:#dedede;border:1px solid #aaa;padding:0;fill:none;stroke:#444;stroke-width:1}
.sel{background:#c5e0f7;border:1px solid #00589e;outline:2px solid #e0704f;outline-offset:1px;border-radius:1px;z-index:1;position:relative}
.tabs{display:flex;margin-top:2px;height:25px;font-size:18px;font-family:"Liberation Serif","Noto Sans CJK TC",serif;font-weight:300;color:#555;border-top:1px solid #aaa;margin-right:2px}
.tab{display:flex;align-items:center;justify-content:center;border-bottom:1px solid #ccc;height:25px;padding-bottom:5px}
.tab.on{background:#fff;margin-top:-1px;height:26px;border:0;border-bottom:1px solid #ddd}
.w1{width:55px}.w2{width:68px}.w3{width:73px}.w4{width:68px}

.center{width:1335px;flex:none;display:flex;flex-direction:column}
.canvasrow{height:612px;display:flex;padding-top:1px;flex:none}
.canvas{width:1310px;height:611px;background:#000}
.vs{width:25px;display:flex;flex-direction:column;align-items:center;padding-top:11px;background:#f0f0f0}
.arr{width:12px;height:8px}
.vthumb{width:25px;height:201px;background:#cdcdcd;margin:203px 0 173px}
.hs{height:27px;display:flex;align-items:center;padding-left:10px;border-bottom:1px solid #888;flex:none}
.arrh{width:8px;height:12px}
.hthumb{width:479px;height:26px;background:#cdcdcd;margin-left:397px;margin-right:auto}
.hs .arrh:last-child{margin-right:36px}
.cmd{display:flex;margin-top:7px;height:133px;flex:none}
.cmdt{width:25px;margin-left:2px;background:#dadada;position:relative;display:flex;flex-direction:column;align-items:center;padding-top:5px;gap:9px}
.dk2{width:9px;height:9px}
.cmdl{position:absolute;bottom:4px;left:50%;transform:translateX(-50%) rotate(-90deg);transform-origin:center;font:19px "Liberation Serif",serif;color:#555;white-space:nowrap;margin-bottom:11px}
.cmdb{flex:1;margin-left:3px;display:flex;flex-direction:column;min-width:0}
.hist{height:89px;border:1px solid #777;background:#fff;display:flex;flex:none}
.hl{flex:1;padding:0 2px;font:17.5px/22px "Liberation Serif","Noto Sans CJK TC",serif;font-weight:300;color:#444;margin-top:-2px}
.hl p{margin:0}
.hv{width:25px;background:#f0f0f0;display:flex;flex-direction:column;align-items:center;padding:8px 0 0}
.hvthumb{width:25px;height:27px;background:#cdcdcd;margin:16px 0 12px}
.prompt{height:20px;font:17.5px/19px "Noto Sans CJK TC",sans-serif;font-weight:300;color:#555;border-bottom:1px solid #888}
.cinput{flex:1;background:#fff;margin-top:2px}

.rpanel{flex:1;border-left:1px solid #888;padding:2px 0 0 6px;min-width:0}
.rh{width:359px;padding-left:5px}
.rinput{width:356px;height:25px;background:#fff;border:1px solid #777;margin:5px 0 0 2px}
.rbtns{display:flex;gap:38px;margin:11px 0 0 30px}
.rlist{width:356px;background:#fff;border:1px solid #888;margin-left:2px}
.r1{height:279px;margin-top:11px}
.lrow{display:flex;height:34px;background:#eee;border-bottom:1px solid #ddd;align-items:center}
.cell{width:24px;height:33px;background:#fff;border-right:1px solid #ddd;display:flex;align-items:center;justify-content:center}
.ci{width:20px;height:20px}
.ci2{width:15px;height:15px}
.blk{width:16px;height:16px;background:#000}
.lname{margin:-2px 0 0 4px;font-size:18px;color:#222;font-family:"Noto Sans",sans-serif}
.r2h{margin-top:9px}
.rb2a{display:flex;gap:35px;margin:6px 0 0 36px}
.rb2b{display:flex;gap:48px;margin:2px 0 0 49px}
.r2{height:290px;margin-top:1px;border-bottom:1px solid #888}

/* bottom bar */
.tb3{height:44px;display:flex;align-items:center;flex:none}
.bex{width:36px;text-align:center;font-size:19px;margin-left:9px;color:#111}
.b{width:30px;height:30px;margin:0 6.5px}
.b-cross{margin:0 5px 0 12px}
.bred{width:43px;height:43px;background:#bdd9f1;border:2px solid #e51f2e;border-radius:5px;display:flex;align-items:center;justify-content:center;flex:none}
.bred+.bred{margin-left:1px}
.bi{width:30px;height:31px}
.bgap{width:42px;flex:none}
.sep.s4{height:36px;background:#ccc;margin:0 5px 0 3px}
.sep.s5{height:44px;margin:0 0 0 3px;background:#aaa}
.sep.s6{height:44px;margin:0 0 0 1px;background:#aaa}
.sep.s7{height:44px;margin:0 0 0 3px;background:#aaa}
.grip.g4{margin-left:4px}
.bm{width:43px;height:42px;display:flex;align-items:center;justify-content:center;border:1px solid transparent;flex:none}
.bm.on{background:#bdd9f1;border-color:#90c8f6}
.mi32{width:32px;height:28px}
.tb3 .grip.g4+.bm{margin-left:6px}
.b-l1{margin-left:12.5px}
.b-d{margin-left:9px}
.status{height:42px;display:flex;flex:none;font-size:17.5px;overflow:hidden;color:#222}
.st{display:flex;flex-direction:column;border-left:1px solid #ccc;padding:0 0 0 5px;line-height:24px;white-space:nowrap;margin-top:3px;height:39px;overflow:hidden;flex:none}
.st1{width:192px;border:0;padding-left:7px}
.st2{width:191px;padding-left:6px}
.st3{width:306px;flex-direction:row;align-items:center;padding-left:14px;gap:8px}
.st3 span{font-size:17.5px;font-weight:300}
.mouse{width:20px;height:24px;margin-top:2px}
.st4{width:54px;padding-left:6px}
.st5{width:73px;padding-left:0;border:0}
.st6{width:121px;padding-left:4px}
.st7{width:108px;padding-left:8px;border-right:1px solid #ccc}
.taskbar{height:11px;background:linear-gradient(90deg,#0c1a2a,#10282b 40%,#10282b);position:relative;overflow:hidden;color:#fff;display:flex;flex:none}
.tbsel{position:absolute;left:671px;top:0;width:73px;height:11px;background:#3a5055}
.clock{position:absolute;left:1752px;top:7px;font-size:14px;line-height:20px}
.tbline{position:absolute;left:1915px;top:0;width:1px;height:11px;background:#8aa}

/* dialog */
.dialog{position:absolute;left:398px;top:20px;width:405px;height:298px;background:#f0f0f0;border:1px solid #0078d7;display:flex;flex-direction:column}
.dtitle{height:44px;background:#fff;display:flex;align-items:center;position:relative;flex:none}
.dlogo{width:25px;height:25px;margin-left:11px}
.dname{font-size:17px;margin:-4px 0 0 5px;color:#222}
.dhelp{margin:-3px 58px 0 auto;font-size:18px;color:#333}
.dclose{width:15px;height:15px;margin-right:27px}
.dbody{flex:1;padding-left:11px;display:flex;flex-direction:column;font-family:"Liberation Serif","Noto Sans CJK TC",serif;font-size:18px;color:#4a4a4a;font-weight:300}
.dtop{display:flex;height:208px;flex:none}
.group{width:171px;height:179px;margin-top:20px;border:1px solid #ddd;position:relative;padding:16px 0 0 11px}
.legend{position:absolute;left:9px;top:-12px;background:#f0f0f0;padding:0 2px;line-height:22px}
.rr{display:flex;align-items:center;height:24px;line-height:24px}
.rr span{margin-top:1px}
.radio{width:20px;height:20px;border-radius:50%;background:#fff;border:1px solid #555;margin-right:10px;flex:none;position:relative}
.radio.on::after{content:"";position:absolute;left:4px;top:4px;width:10px;height:10px;border-radius:50%;background:#333}
.dis{width:147px;height:25px;background:#eee;border:1px solid #ccc;margin-top:4px;line-height:23px;padding-left:3px;color:#999;font-size:16px}
.dright{margin-left:7px;padding-top:15px;width:204px}
.rotimg{width:85px;height:83px;background:#dedede;border:1px solid #aaa}
.angle{display:flex;align-items:center;margin-top:11px;height:25px}
.al{width:59px;margin-top:-4px}
.ainp{width:144px;height:25px;background:#fff;border:1px solid #888;line-height:23px;padding-left:3px;color:#444;font-size:16px}
.ck{display:flex;align-items:center;height:20px;margin-top:11px}
.ck span{margin-top:-3px}
.ck2{margin-top:11px}
.cbox{width:20px;height:20px;background:#fff;border:1px solid #444;margin-right:8px;flex:none}
.dbtns{display:flex;gap:10px;margin-left:149px;margin-top:0}
.btn{height:31px;display:flex;align-items:center;justify-content:center;background:#ddd;color:#333;font-size:17px}
.ok{width:111px;border:2px solid #0078d7}
.cancel{width:110px;border:1px solid #adadad}
.bigcur{position:absolute;left:593px;top:59px;width:19px;height:30px}

/* annotations */
.redbox{position:absolute;border:2px solid #e51f2e;border-radius:5px}
.rb-radio{left:412px;top:100px;width:136px;height:30px;border-radius:15px}
.rb-ok{left:592px;top:272px;width:46px;height:32px}
.badge{position:absolute;width:39px;height:39px;margin:-19.5px 0 0 -19.5px;border-radius:50%;background:#d9664a;color:#fff;font:bold 29px/39px "Liberation Sans",sans-serif;text-align:center;box-shadow:1px 1px 2px #555}
.n1{left:1028px;top:447px}
.n2{left:136px;top:823px}
.n3{left:210px;top:957px}
.n4{left:897px;top:652px}
.n5{left:949px;top:390px}
.n6{left:117px;top:910px}
.n7{left:748px;top:647px}
.n8{left:535px;top:41px}
.n9{left:573px;top:114px}
.n10{left:661px;top:289px;letter-spacing:-1px}
```
